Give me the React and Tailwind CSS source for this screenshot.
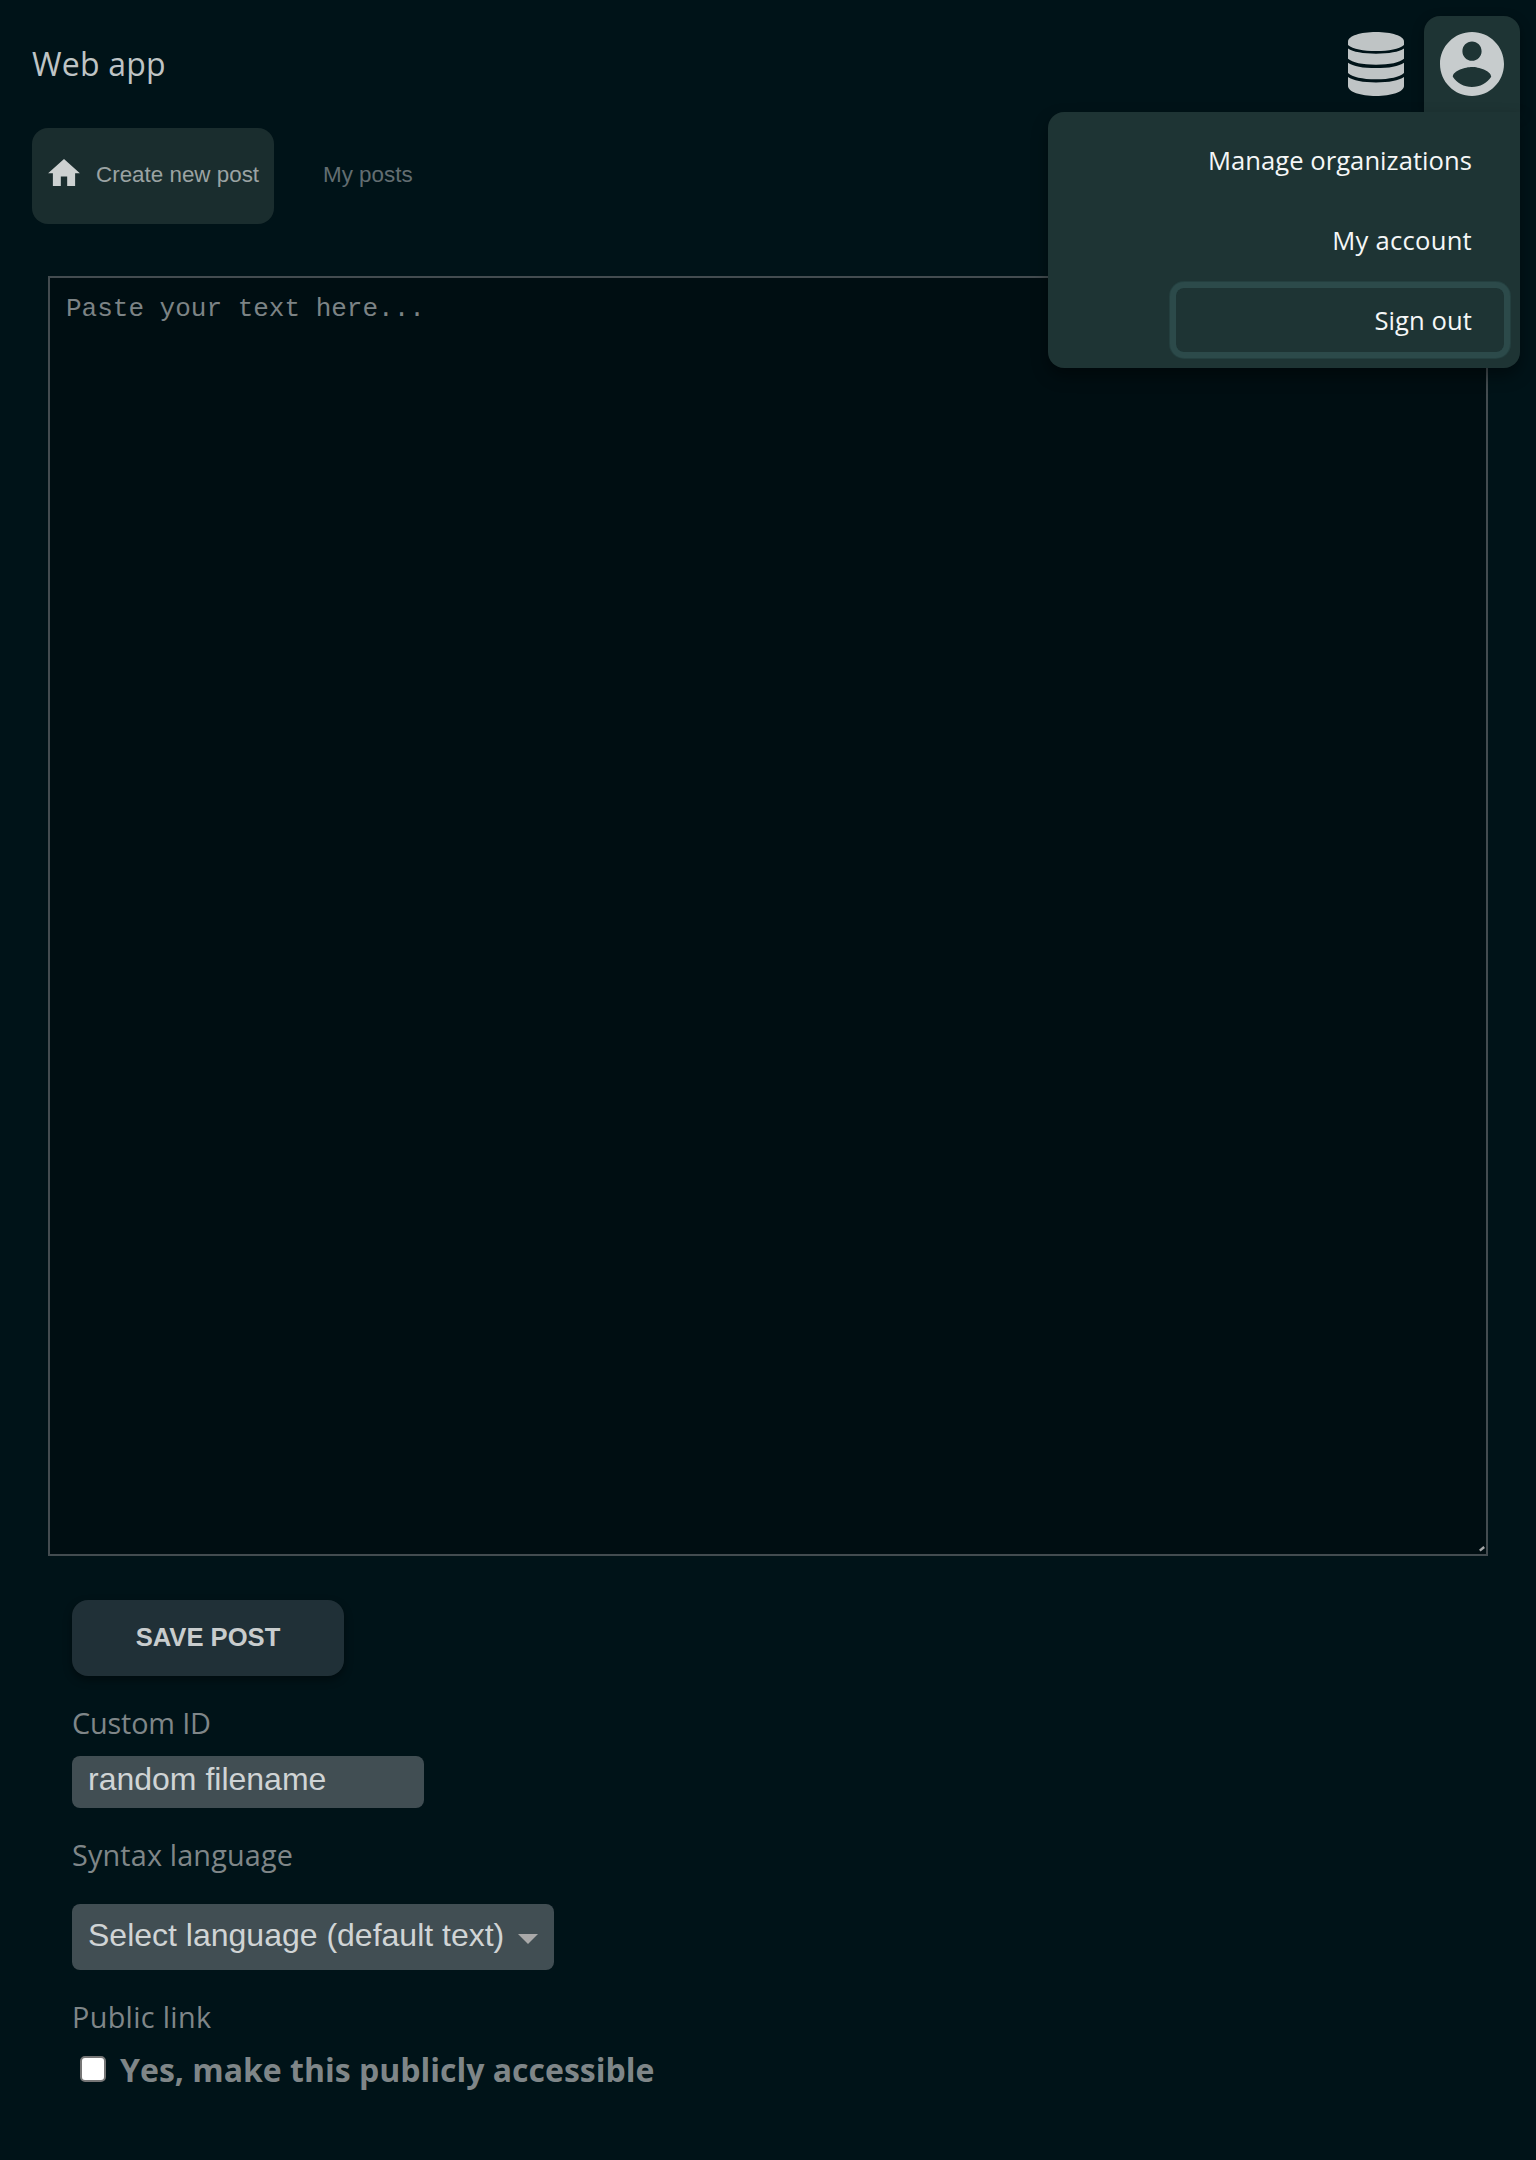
export default function App() {
  return (
    <div className="min-h-[2160px] w-full bg-[#001318] font-['Open_Sans',sans-serif]">
      <header className="flex h-32 items-start justify-between pl-8 pr-4 pt-4">
        <h1 className="mt-[26px] text-[32px] leading-[44px] tracking-[0.2px] text-[#bfc4c5]">Web app</h1>
        <div className="flex">
          <button className="grid size-24 place-items-center">
            <svg className="h-16 w-14 text-[#bfc4c5]" viewBox="0 0 56 64" fill="currentColor">
              <path d="M0 9.500C0 4 12.500 0 28 0s28 4 28 9.500V13C51 17 41 19 28 19S5 17 0 13z" />
              <path d="M0 16.500c5 3.400 15 5.200 28 5.200s23-1.800 28-5.200v10.300c-4.500 3.800-14 5.900-28 5.900S4.500 30.600 0 26.800z" />
              <path d="M0 30.700c5 3.600 15 5.400 28 5.400s23-1.800 28-5.400V41c-4.500 4-14 6.300-28 6.300S4.500 45 0 41z" />
              <path d="M0 45c5 3.600 15 5.400 28 5.400S51 48.600 56 45v9c0 5.800-12.500 10-28 10S0 59.800 0 54z" />
            </svg>
          </button>
          <div className="relative z-10">
            <button className="grid size-24 place-items-center rounded-t-2xl bg-[#1e3434] shadow-[0_4px_12px_rgba(0,0,0,0.35)]">
              <svg className="size-16 text-[#c7cccd]" viewBox="2 2 20 20" fill="currentColor">
                <path d="M12 2C6.480 2 2 6.480 2 12s4.480 10 10 10 10-4.480 10-10S17.520 2 12 2zm0 3c1.660 0 3 1.340 3 3s-1.340 3-3 3-3-1.340-3-3 1.340-3 3-3zm0 14.200c-2.500 0-4.710-1.280-6-3.220.030-1.990 4-3.080 6-3.080 1.990 0 5.970 1.090 6 3.080-1.290 1.940-3.500 3.220-6 3.220z" />
              </svg>
            </button>
            <nav className="absolute right-0 top-24 flex h-64 w-[472px] flex-col items-end gap-4 rounded-2xl rounded-tr-none bg-[#1e3434] p-4 text-[25.6px] text-[#f5f7f7] shadow-[0_8px_16px_rgba(0,0,0,0.4)]">
              <a className="flex h-16 w-[328px] items-center justify-end whitespace-nowrap px-8 pt-0.5 tracking-[0.04px]">Manage organizations</a>
              <a className="flex h-16 w-[328px] items-center justify-end whitespace-nowrap px-8 pt-0.5 tracking-[0.27px]">My account</a>
              <a className="flex h-16 w-[328px] items-center justify-end whitespace-nowrap rounded-lg px-8 pt-0.5 tracking-[0.08px] shadow-[0_0_0_6px_#2c4a4a,0_0_0_7px_#243f3f]">Sign out</a>
            </nav>
          </div>
        </div>
      </header>
      <div className="flex h-24 pl-8 font-['Liberation_Sans',sans-serif] text-[22.4px]">
        <a className="flex w-[242px] items-center rounded-2xl bg-[#1a2d2e] pl-4 text-[#9ba3a3]">
          <svg className="-mt-2 h-[27px] w-8 text-[#cdd1d1]" viewBox="2 3 20 17" fill="currentColor">
            <path d="M10 20v-6h4v6h5v-8h3L12 3 2 12h3v8z" />
          </svg>
          <span className="-mt-0.5 ml-4">Create new post</span>
        </a>
        <a className="-mt-0.5 flex items-center pl-[49px] text-[#626d71]">My posts</a>
      </div>
      <main className="px-12 pt-[52px]">
        <div className="relative">
          <textarea
            className="block h-[1280px] w-[1440px] resize-none border-2 border-[#434c50] bg-[#000e12] p-4 font-['Liberation_Mono',monospace] text-[26px] leading-[30px] outline-none placeholder:text-[#7c8385]"
            placeholder="Paste your text here..."
          />
          <svg className="pointer-events-none absolute bottom-1 right-[3px] h-1.5 w-[6px]" viewBox="0 0 6 6">
            <path d="M0.800 4.700L5.200 1" stroke="#a5a8a9" strokeWidth="2.400" />
          </svg>
        </div>
        <div className="flex flex-col items-start pl-6 pt-11 text-[#7f8688]">
          <button className="h-[76px] w-[272px] rounded-2xl bg-[#203037] pb-0.5 font-['Liberation_Sans',sans-serif] text-[25.6px] font-bold text-[#c8cccd] shadow-[0_4px_8px_rgba(0,0,0,0.4)]">SAVE POST</button>
          <label className="mt-[27px] text-[28.8px] leading-[40px] tracking-[-0.15px]">Custom ID</label>
          <input
            className="mt-[13px] h-[52px] w-[352px] rounded-lg bg-[#414e53] px-4 pb-1.5 font-['Liberation_Sans',sans-serif] text-[32px] outline-none placeholder:text-[#d0d4d5]"
            placeholder="random filename"
          />
          <label className="mt-[27px] text-[28.8px] leading-[40px] tracking-[0.15px]">Syntax language</label>
          <button className="mt-[29px] flex h-[66px] w-[482px] items-center rounded-lg bg-[#414e53] pl-4 font-['Liberation_Sans',sans-serif] text-[32px] text-[#d0d4d5]">
            <span className="whitespace-nowrap pb-1">Select language (default text)</span>
            <svg className="ml-3.5 mt-[3px] h-[10px] w-5" viewBox="0 0 20 10" fill="#a9a9a9"><path d="M0 0h20L10 10z" /></svg>
          </button>
          <label className="mt-[27px] text-[28.8px] leading-[40px] tracking-[0.33px]">Public link</label>
          <label className="mt-[11px] flex items-center pl-2 text-[32px] font-bold leading-[44px]">
            <span className="-mt-0.5 mr-3.5 size-[26px] rounded-[5px] border-2 border-[#767676] bg-white" />
            Yes, make this publicly accessible
          </label>
        </div>
      </main>
    </div>
  );
}
